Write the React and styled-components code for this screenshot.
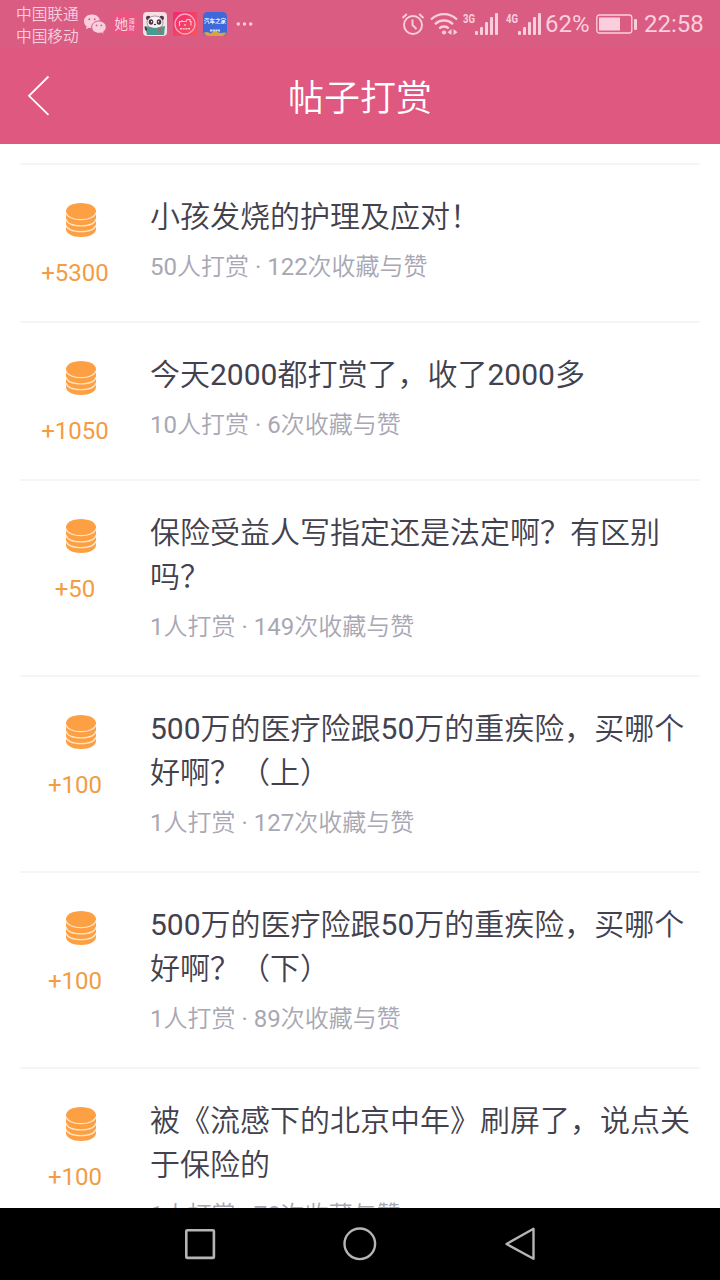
import React from "react";
import styled, { createGlobalStyle } from "styled-components";

const GlobalStyle = createGlobalStyle`
  * {
    box-sizing: border-box;
  }
  body {
    margin: 0;
    background: #fff;
    font-family: Roboto, "Noto Sans CJK SC DemiLight", "Noto Sans CJK SC", sans-serif;
  }
`;

const Screen = styled.div`
  display: flex;
  flex-direction: column;
  width: 720px;
  height: 1280px;
  overflow: hidden;
  background: #fff;
`;

const StatusBar = styled.div`
  display: flex;
  flex: none;
  align-items: center;
  height: 48px;
  padding: 0 16px;
  background: #da5c82;
  color: #f9cfdd;
`;

const Carriers = styled.div`
  width: 67px;
  padding-top: 3px;
  font-size: 15.7px;
  line-height: 22px;
  white-space: nowrap;
`;

const AppIcons = styled.div`
  display: flex;
  align-items: center;
  gap: 6px;

  svg {
    display: block;
  }
`;

const SystemIcons = styled.div`
  display: flex;
  align-items: center;
  margin-left: auto;

  svg {
    display: block;
  }
`;

const IconSlot = styled.span`
  margin-right: ${(props) => props.$gap}px;
`;

const StatusText = styled.span`
  width: ${(props) => props.$width}px;
  font-size: 24px;
  line-height: 48px;
  white-space: nowrap;
`;

const Header = styled.header`
  display: grid;
  flex: none;
  grid-template-columns: 80px 1fr 80px;
  align-items: center;
  height: 96px;
  background: #df587f;
  color: #fff;
`;

const BackButton = styled.button`
  display: flex;
  padding: 0 0 0 26px;
  border: 0;
  background: none;
`;

const Title = styled.h1`
  margin: 0;
  padding-top: 5px;
  font-size: 36px;
  font-weight: 400;
  line-height: 48px;
  text-align: center;
`;

const List = styled.main`
  flex: 1;
  min-height: 0;
  overflow: hidden;
  padding: 19px 20px 0;
`;

const Row = styled.article`
  display: flex;
  min-height: 158px;
  padding: 30px 0 31px;
  border-top: 2px solid #f5f5f6;
`;

const Reward = styled.div`
  display: flex;
  flex: none;
  flex-direction: column;
  align-items: center;
  width: 110px;
  margin-right: 20px;
  padding-top: 8px;

  svg {
    margin-left: 12px;
  }
`;

const Amount = styled.div`
  margin-top: 19px;
  color: #f39c42;
  font-size: 24px;
  line-height: 34px;
`;

const Post = styled.div`
  flex: 1;
  min-width: 0;
`;

const PostTitle = styled.h2`
  margin: 0;
  color: #42414d;
  font-size: 30px;
  font-weight: 400;
  line-height: 44px;
`;

const Meta = styled.p`
  margin: 11px 0 0;
  color: #a8a7b3;
  font-size: 24px;
  line-height: 34px;
  white-space: nowrap;
`;

const NavBar = styled.nav`
  display: flex;
  flex: none;
  align-items: center;
  justify-content: center;
  gap: 124px;
  height: 72px;
  background: #000;
`;

const WechatIcon = () => (
  <svg width="24" height="24" viewBox="0 0 24 24" fill="#f9cfdd">
    <path d="M9 2.5C4.3 2.5 1 5.400 1 9.200c0 2.200 1 4 2.700 5.200L3 17.300l3-1.600c1 .3 2 .4 3 .4C13.500 16 17 13 17 9.300 17 5.400 13.500 2.500 9 2.500z" />
    <path
      d="M16 9c-4.200 0-7.300 2.700-7.300 6.100 0 3.500 3.100 6.200 7.300 6.200 1 0 1.900-.2 2.700-.4l2.500 1.500-.6-2.600c1.600-1.100 2.600-2.800 2.600-4.700C23.200 11.700 20.200 9 16 9z"
      stroke="#da5c82"
      strokeWidth="1"
    />
    <g fill="#da5c82">
      <circle cx="6.300" cy="7.300" r="1" />
      <circle cx="11.700" cy="7.300" r="1" />
      <circle cx="13.600" cy="13.400" r=".9" />
      <circle cx="18.300" cy="13.400" r=".9" />
    </g>
  </svg>
);

const TaIcon = () => (
  <svg width="24" height="24" viewBox="0 0 24 24">
    <rect width="24" height="24" rx="2" fill="#ea5480" />
    <g fill="#fbd5e1" fontFamily="'Noto Sans CJK SC', sans-serif">
      <text x="1.500" y="17" fontSize="13.500">她</text>
      <text x="15.800" y="11" fontSize="6">理</text>
      <text x="15.800" y="18" fontSize="6">财</text>
    </g>
  </svg>
);

const PandaIcon = () => (
  <svg width="24" height="24" viewBox="0 0 24 24">
    <rect width="24" height="24" rx="4" fill="#f7dfe5" />
    <circle cx="5.300" cy="6" r="2.300" fill="#463844" />
    <circle cx="18.700" cy="6" r="2.300" fill="#463844" />
    <ellipse cx="12" cy="10.500" rx="8" ry="6.500" fill="#fff1f1" stroke="#776270" strokeWidth=".6" />
    <ellipse cx="8" cy="10" rx="2.300" ry="2.700" fill="#463844" />
    <ellipse cx="16" cy="10" rx="2.300" ry="2.700" fill="#463844" />
    <circle cx="8.500" cy="9.800" r=".7" fill="#fff" />
    <circle cx="15.500" cy="9.800" r=".7" fill="#fff" />
    <ellipse cx="12" cy="12.500" rx="1.200" ry=".8" fill="#463844" />
    <path d="M2 14l10 2 10-2-1 9H4z" fill="#479c91" />
    <path d="M15 16.500l3-.5v5l-1.600-1.500-1.400 1.500z" fill="#9a7163" />
    <path d="M1.500 14.500c2 0 3 2 2.500 4.500l-2-1z" fill="#463844" />
  </svg>
);

const PinkCircleIcon = () => (
  <svg width="24" height="24" viewBox="0 0 24 24" fill="none">
    <defs>
      <linearGradient id="pinkApp" x1="0" y1="0" x2="1" y2="1">
        <stop offset="0" stopColor="#f32872" />
        <stop offset="1" stopColor="#f5565a" />
      </linearGradient>
    </defs>
    <rect width="24" height="24" rx="2" fill="url(#pinkApp)" />
    <circle cx="12" cy="12" r="10" stroke="#f9a9c1" strokeWidth="1.300" />
    <path d="M6.500 14V9.500h6.500l1-2h3v2h1v4M9 9.500V8M12 12v2" stroke="#fbc4d4" strokeWidth="1.200" />
    <path d="M7 16.800h10" stroke="#fbc4d4" strokeWidth="1.400" strokeDasharray="2 .7" />
  </svg>
);

const AutoIcon = () => (
  <svg width="24" height="24" viewBox="0 0 24 24">
    <rect width="24" height="24" rx="4.500" fill="#3d69dd" />
    <path d="M1 20.500l4-.5 2 1.500 5-2.500 5 2 6-.5c-.5 2.200-2 3.500-4 3.500H5c-2 0-3.500-1.300-4-3.500z" fill="#d6a63c" />
    <text
      x="1"
      y="10.800"
      fill="#eceffb"
      fontFamily="'Noto Sans CJK SC', sans-serif"
      fontSize="5.500"
      fontWeight="700"
    >
      汽车之家
    </text>
    <path d="M7 18.500h10" stroke="#d9def6" strokeWidth="2.200" strokeDasharray="2.200 .5" />
  </svg>
);

const MoreIcon = () => (
  <svg width="20" height="24" viewBox="0 0 20 24" fill="#f9cfdd">
    <circle cx="5.300" cy="12" r="1.700" />
    <circle cx="11.500" cy="12" r="1.700" />
    <circle cx="17.700" cy="12" r="1.700" />
  </svg>
);

const AlarmIcon = () => (
  <svg width="24" height="24" viewBox="0 0 24 24" fill="none" stroke="#f9cfdd" strokeWidth="1.900">
    <circle cx="12" cy="13" r="9" />
    <path d="M11.500 7.500v5.500l4 4M1.500 6l4.300-4M22.500 6l-4.300-4" />
  </svg>
);

const WifiIcon = () => (
  <svg width="28" height="24" viewBox="0 0 28 24" fill="none" stroke="#f9cfdd" strokeWidth="2.300">
    <path d="M1 7.500C8.300 .3 19.700 .3 27 7.500M5 12.300c5-5.100 13-5.100 18 0M9.200 16.500c2.700-2.700 6.900-2.700 9.600 0" />
    <circle cx="14" cy="20.500" r="2.100" fill="#f9cfdd" stroke="none" />
    <path d="M21.500 17v6l-4-2.800zM23.500 17l4 3.200-4 2.800z" fill="#f9cfdd" stroke="none" />
  </svg>
);

const SignalIcon = ({ label }) => (
  <svg width="36" height="24" viewBox="0 0 36 24" fill="#f9cfdd">
    <text
      x="0"
      y="11"
      fontSize="13"
      fontWeight="700"
      fontFamily="Roboto, sans-serif"
      textLength="12"
      lengthAdjust="spacingAndGlyphs"
    >
      {label}
    </text>
    <rect x="12" y="19" width="3" height="4" rx="1" />
    <rect x="17" y="15" width="3" height="8" rx="1" />
    <rect x="22" y="10" width="3" height="13" rx="1" />
    <rect x="27" y="5" width="3" height="18" rx="1" />
    <rect x="32" y="1" width="3" height="22" rx="1" />
  </svg>
);

const BatteryIcon = () => (
  <svg width="42" height="20" viewBox="0 0 42 20">
    <rect x=".8" y="1" width="35" height="18" rx="2.500" fill="none" stroke="#f9cfdd" strokeWidth="1.300" />
    <rect x="3" y="3.500" width="21" height="13" fill="#f9cfdd" />
    <rect x="38" y="5" width="3" height="11" rx="1" fill="#f9cfdd" />
  </svg>
);

const BackIcon = () => (
  <svg width="24" height="42" viewBox="0 0 24 42" fill="none" stroke="#fff" strokeWidth="1.800">
    <path d="M22.500 1.500L3 20.800l19.500 19" />
  </svg>
);

const CoinsIcon = () => (
  <svg width="32" height="34" viewBox="0 0 32 34">
    <path
      d="M1 8C1 3.600 7.500 0 16 0s15 3.600 15 8v18c0 4.500-6.500 8-15 8S1 30.500 1 26z"
      fill="#fd9f43"
    />
    <path
      d="M1 9.500c1 4.400 7.200 7.100 15 7.100s14-2.700 15-7.100M1 16c1 4.400 7.200 6.800 15 6.800S30 20.400 31 16M1 22c1 4.300 7.200 6.600 15 6.600s14-2.300 15-6.600"
      fill="none"
      stroke="#ffe6c8"
      strokeWidth="1.200"
    />
  </svg>
);

const posts = [
  { amount: "+5300", title: "小孩发烧的护理及应对！", meta: "50人打赏 · 122次收藏与赞" },
  { amount: "+1050", title: "今天2000都打赏了，收了2000多", meta: "10人打赏 · 6次收藏与赞" },
  { amount: "+50", title: "保险受益人写指定还是法定啊？有区别吗？", meta: "1人打赏 · 149次收藏与赞" },
  { amount: "+100", title: "500万的医疗险跟50万的重疾险，买哪个好啊？（上）", meta: "1人打赏 · 127次收藏与赞" },
  { amount: "+100", title: "500万的医疗险跟50万的重疾险，买哪个好啊？（下）", meta: "1人打赏 · 89次收藏与赞" },
  { amount: "+100", title: "被《流感下的北京中年》刷屏了，说点关于保险的", meta: "1人打赏 · 70次收藏与赞" },
];

const App = () => {
  return (
    <Screen lang="zh-CN">
      <GlobalStyle />
      <StatusBar>
        <Carriers>
          中国联通
          <br />
          中国移动
        </Carriers>
        <AppIcons>
          <WechatIcon />
          <TaIcon />
          <PandaIcon />
          <PinkCircleIcon />
          <AutoIcon />
          <MoreIcon />
        </AppIcons>
        <SystemIcons>
          <IconSlot $gap={5}>
            <AlarmIcon />
          </IconSlot>
          <IconSlot $gap={5}>
            <WifiIcon />
          </IconSlot>
          <IconSlot $gap={7}>
            <SignalIcon label="3G" />
          </IconSlot>
          <IconSlot $gap={3}>
            <SignalIcon label="4G" />
          </IconSlot>
          <StatusText $width={51}>62%</StatusText>
          <IconSlot $gap={6}>
            <BatteryIcon />
          </IconSlot>
          <StatusText $width={60}>22:58</StatusText>
        </SystemIcons>
      </StatusBar>
      <Header>
        <BackButton aria-label="返回">
          <BackIcon />
        </BackButton>
        <Title>帖子打赏</Title>
      </Header>
      <List>
        {posts.map((post) => (
          <Row key={post.title}>
            <Reward>
              <CoinsIcon />
              <Amount>{post.amount}</Amount>
            </Reward>
            <Post>
              <PostTitle>{post.title}</PostTitle>
              <Meta>{post.meta}</Meta>
            </Post>
          </Row>
        ))}
      </List>
      <NavBar>
        <svg width="36" height="36" viewBox="0 0 36 36" fill="none" stroke="#b5b5b5" strokeWidth="2.600">
          <rect x="4.300" y="4.300" width="27.600" height="27.600" rx="1" />
        </svg>
        <svg width="36" height="36" viewBox="0 0 36 36" fill="none" stroke="#b5b5b5" strokeWidth="2.400">
          <circle cx="17.800" cy="17.800" r="15.300" />
        </svg>
        <svg width="36" height="36" viewBox="0 0 36 36" fill="none" stroke="#b5b5b5" strokeWidth="2.400">
          <path d="M31.500 2.800v30L4.500 18z" strokeLinejoin="round" />
        </svg>
      </NavBar>
    </Screen>
  );
};

export default App;
